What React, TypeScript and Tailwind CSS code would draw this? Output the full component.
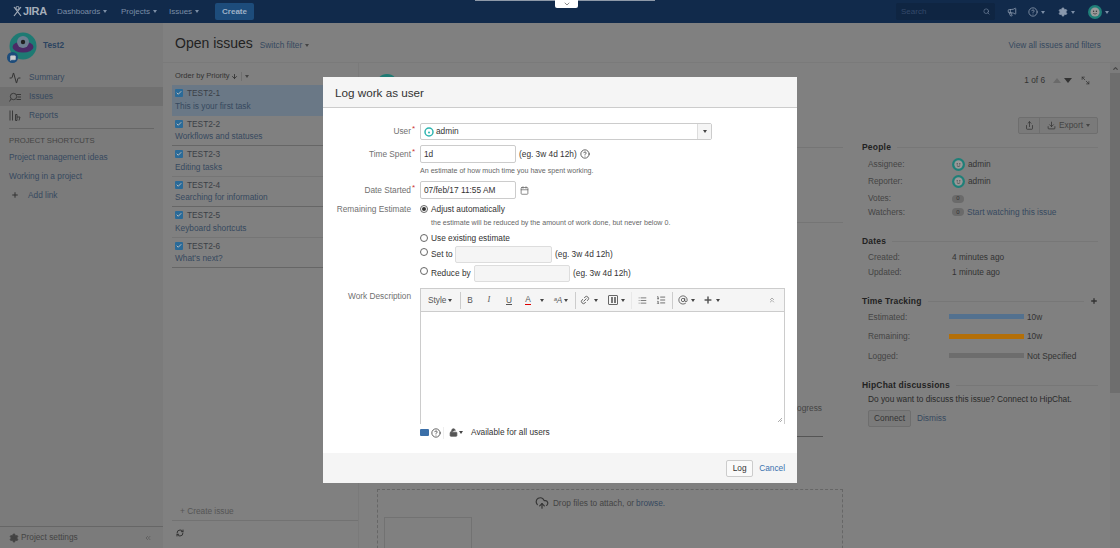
import React from "react";
import { ArrowDown, Calendar, ChevronDown, ChevronUp, ChevronsLeft, ChevronsUp, CircleHelp, Link2, List, ListOrdered, Plus, Search, Settings, Megaphone, Share, Download, RefreshCw, LockOpen, Activity, Maximize2, UploadCloud, AtSign, Check, MessageSquare } from "lucide-react";

const Caret = ({ c = "border-t-[#444]" }: { c?: string }) => (
  <span className={`inline-block w-0 h-0 border-l-[2.5px] border-r-[2.5px] border-t-[3px] border-l-transparent border-r-transparent ${c}`} />
);

const Face = ({ s = 13 }: { s?: number }) => (
  <svg width={s} height={s} viewBox="0 0 20 20" className="shrink-0">
    <circle cx="10" cy="10" r="10" fill="#1f7f78" />
    <circle cx="10" cy="10" r="6.5" fill="#999" />
    <circle cx="8" cy="9" r="1" fill="#333" />
    <circle cx="12" cy="9" r="1" fill="#333" />
    <path d="M7.5 12 Q10 14 12.5 12" stroke="#333" strokeWidth="1" fill="none" />
  </svg>
);

const issues = [
  ["TEST2-1", "This is your first task"],
  ["TEST2-2", "Workflows and statuses"],
  ["TEST2-3", "Editing tasks"],
  ["TEST2-4", "Searching for information"],
  ["TEST2-5", "Keyboard shortcuts"],
  ["TEST2-6", "What's next?"],
];

const SectionHead = ({ t, plus }: { t: string; plus?: boolean }) => (
  <div className="flex items-center gap-1.5 h-[12px]">
    <span className="font-bold text-[8.5px] text-[#222] tracking-[0.2px] whitespace-nowrap">{t}</span>
    <span className="flex-1 h-px bg-[#777]" />
    {plus && <Plus size={8} strokeWidth={4} className="text-[#333]" />}
  </div>
);

const Kv = ({ k, children, h = "h-[16px]", cls = "" }: { k: string; children: React.ReactNode; h?: string; cls?: string }) => (
  <div className={`flex items-center ${h} ${cls}`}>
    <span className="w-[90px] pl-[6px] shrink-0 text-[#444]">{k}</span>
    {children}
  </div>
);

const Bar = ({ k, c, v }: { k: string; c: string; v: string }) => (
  <div className="flex items-center h-[19.5px]">
    <span className="w-[87px] pl-[6px] shrink-0 text-[#444]">{k}</span>
    <span className={`w-[75px] h-[5px] ${c}`} />
    <span className="ml-[3px] text-[#333]">{v}</span>
  </div>
);

const Req = ({ t }: { t: string }) => (
  <span className="w-[89px] shrink-0 text-right text-[#707070] pr-px relative whitespace-nowrap">
    {t}
    <span className="absolute -right-[3px] -top-[2px] text-[#c33] text-[8px]">*</span>
  </span>
);

const Radio = ({ on }: { on?: boolean }) => (
  <span className="w-[8px] h-[8px] rounded-full border border-[#666] bg-white flex items-center justify-center shrink-0">
    {on && <span className="w-[4px] h-[4px] rounded-full bg-[#333]" />}
  </span>
);

const Sep = ({ c = "bg-[#ccc]", m = "" }: { c?: string; m?: string }) => <span className={`w-px h-[17px] shrink-0 ${c} ${m}`} />;

const Slot = ({ w, children }: { w: string; children: React.ReactNode }) => (
  <span className={`${w} shrink-0 flex items-center justify-center`}>{children}</span>
);

export default function App() {
  return (
    <div className="relative w-[1120px] h-[548px] overflow-hidden bg-[#808080] text-[8.3px] text-[#333] font-['Liberation_Sans',Arial,sans-serif]">
      {/* top bar */}
      <header className="h-[23px] bg-[#112a4b] flex items-center text-[8px] text-[#7c8ea6]">
        <div className="ml-[13px] w-[44px] flex items-center gap-[1px] text-[#a5aeba] font-bold text-[11px] tracking-[-0.3px]">
          <svg width="9" height="11" viewBox="0 0 9 11"><circle cx="4.5" cy="2" r="1.6" fill="none" stroke="#a5aeba" /><path d="M1 1 L8 10 M8 1 L1 10" stroke="#a5aeba" strokeWidth="1.2" /></svg>
          JIRA
        </div>
        <span className="flex items-center gap-[3px] w-[64px]">Dashboards <Caret c="border-t-[#7c8ea6]" /></span>
        <span className="flex items-center gap-[3px] w-[48px]">Projects <Caret c="border-t-[#7c8ea6]" /></span>
        <span className="flex items-center gap-[3px] w-[46px]">Issues <Caret c="border-t-[#7c8ea6]" /></span>
        <span className="h-[17px] w-[39px] rounded-[2px] bg-[#1d4c7b] text-[#9fb2c8] font-bold flex items-center justify-center">Create</span>
        <div className="ml-auto flex items-center">
          <div className="w-[99px] h-[17px] rounded-[2px] bg-[#0f2542] flex items-center justify-between px-[5px] text-[#34496a]">
            Search <Search size={7} className="text-[#7c8ea6]" />
          </div>
          <Megaphone size={10} className="ml-[12px] text-[#8a99ad]" />
          <CircleHelp size={10} className="ml-[11px] text-[#8a99ad]" />
          <span className="ml-[3px]"><Caret c="border-t-[#7c8ea6]" /></span>
          <Settings size={10} className="ml-[13px] text-[#8a99ad]" fill="#8a99ad" />
          <span className="ml-[3px]"><Caret c="border-t-[#7c8ea6]" /></span>
          <span className="ml-[13px]"><Face s={14} /></span>
          <span className="ml-[3px] mr-[11px]"><Caret c="border-t-[#7c8ea6]" /></span>
        </div>
      </header>

      <div className="flex h-[525px]">
        {/* project sidebar */}
        <aside className="w-[163px] shrink-0 bg-[#7b7b7b] flex flex-col">
          <div className="flex items-center h-[45px] pl-[9px] pt-[1px]">
            <div className="relative">
              <svg width="28" height="28" viewBox="0 0 28 28">
                <circle cx="14" cy="14" r="13.5" fill="#1e7a73" />
                <ellipse cx="14" cy="15" rx="10.5" ry="5.5" fill="#4a2a66" />
                <circle cx="14" cy="10" r="6" fill="#6d7f90" />
                <circle cx="14" cy="10" r="2.2" fill="#222" />
              </svg>
              <span className="absolute -left-[2px] bottom-[-3px] w-[11px] h-[11px] rounded-full bg-[#1d4c7b] flex items-center justify-center">
                <MessageSquare size={6} className="text-[#ccc]" fill="#ccc" />
              </span>
            </div>
            <span className="ml-[6px] font-bold text-[#2b4460] mb-[1px]">Test2</span>
          </div>
          <nav className="flex flex-col">
            <div className="h-[19px] flex items-center pl-[9px] gap-[8px] text-[#36495f]"><Activity size={12} className="text-[#333]" /><span>Summary</span></div>
            <div className="h-[19px] flex items-center pl-[9px] gap-[8px] text-[#36495f] bg-[#707070]">
              <svg width="12" height="10" viewBox="0 0 12 10" fill="none" stroke="#333" strokeWidth="0.9"><circle cx="4.5" cy="4.5" r="3.2" /><path d="M2 7 L0.5 9.5 M7.5 2.5 H12 M8.5 5 H12 M7.5 7.5 H12" /></svg>
              <span>Issues</span>
            </div>
            <div className="h-[19px] flex items-center pl-[9px] gap-[8px] text-[#36495f]">
              <svg width="12" height="11" viewBox="0 0 12 11" fill="none" stroke="#333" strokeWidth="0.9"><path d="M1 0.5 V10.5 M3.5 0.5 V10.5 M6.5 4.5 H8 V10.5 H6.5 Z M8 7 H11 L10 10.5" /></svg>
              <span>Reports</span>
            </div>
          </nav>
          <div className="mx-[9px] mt-[3px] h-px bg-[#666]" />
          <div className="pl-[9px] mt-[6px] text-[7.7px] text-[#444]">PROJECT SHORTCUTS</div>
          <div className="pl-[9px] mt-[1px] h-[19px] flex items-center text-[#36495f]">Project management ideas</div>
          <div className="pl-[9px] h-[19px] flex items-center text-[#36495f]">Working in a project</div>
          <div className="pl-[11px] h-[19px] flex items-center gap-[9px] text-[#36495f]"><Plus size={8} strokeWidth={3} className="text-[#333]" />Add link</div>
          <div className="mt-auto h-[22px] border-t border-[#666] flex items-center pl-[9px] pr-[11px] text-[#444]">
            <Settings size={10} fill="#444" className="text-[#444] mr-[2px]" />
            Project settings
            <ChevronsLeft size={8} className="ml-auto text-[#555]" />
          </div>
        </aside>

        {/* main */}
        <main className="flex-1 flex flex-col relative">
          <div className="h-[40px] flex items-center pl-[12px] pr-[19px] pt-[2px] border-b border-[#7a7a7a]">
            <span className="text-[14px] text-[#222]">Open issues</span>
            <span className="ml-[7px] text-[#36495f] flex items-center gap-[3px] mt-[3px]">Switch filter <Caret /></span>
            <span className="ml-auto text-[#36495f] mt-[3px]">View all issues and filters</span>
          </div>
          <div className="flex flex-1 min-h-0">
            {/* issue list */}
            <section className="w-[186px] ml-[9px] flex flex-col shrink-0">
              <div className="h-[22px] pt-[4px] flex items-center text-[7.5px] text-[#333]">
                <span className="ml-[3px]">Order by Priority</span>
                <ArrowDown size={7} strokeWidth={3} className="ml-[1px]" />
                <span className="w-px h-[9px] bg-[#707070] mx-[3px]" />
                <Caret />
              </div>
              {issues.map(([id, t], i) => (
                <div key={id} className={`h-[30.5px] px-[3px] flex flex-col justify-center border-b ${i === 0 ? "bg-[#6a7886] border-[#6a7886]" : i % 2 ? "border-[#666]" : "border-[#757575]"}`}>
                  <div className="flex items-center gap-[4px] text-[#3a3f46] h-[13px]">
                    <span className="w-[8px] h-[8px] rounded-[1px] bg-[#2a6a98] flex items-center justify-center"><Check size={6} strokeWidth={4} className="text-[#bbb]" /></span>
                    {id}
                  </div>
                  <div className="text-[#36495f] h-[13px] leading-[13px] whitespace-nowrap">{t}</div>
                </div>
              ))}
              <div className="mt-auto h-[21px] flex items-end pb-[3px] pl-[8px] text-[#555]">+ Create issue</div>
              <div className="h-[28px] border-t border-[#727272] pl-[4px] pt-[8px]"><RefreshCw size={8} strokeWidth={3} className="text-[#333]" /></div>
            </section>

            {/* detail */}
            <section className="flex-1 border-l border-[#7a7a7a] flex flex-col min-w-0">
              <div className="h-[35px] flex items-center pr-[20px] mr-[10px]">
                <span className="ml-[17px] self-start mt-[11px] w-[22px] h-[22px] rounded-full bg-[#1e7a73]" />
                <span className="ml-auto text-[#333]">1 of 6</span>
                <span className="ml-[8px] w-0 h-0 border-l-[4px] border-r-[4px] border-b-[5px] border-l-transparent border-r-transparent border-b-[#6a6a6a]" />
                <span className="ml-[3px] w-0 h-0 border-l-[4px] border-r-[4px] border-t-[5px] border-l-transparent border-r-transparent border-t-[#333]" />
                <Maximize2 size={9} className="ml-[9px] text-[#333] -scale-x-100" />
              </div>
              <div className="flex justify-end pr-[12px] mr-[10px] mt-[19px]">
                <div className="flex h-[17px] border border-[#6e6e6e] rounded-[2px] bg-[#7a7a7a] items-center">
                  <span className="w-[21px] flex justify-center border-r border-[#6e6e6e] h-full items-center"><Share size={9} className="text-[#333]" /></span>
                  <span className="px-[7px] flex items-center gap-[3px] text-[#444]"><Download size={9} className="text-[#333]" />Export <Caret /></span>
                </div>
              </div>
              <div className="flex flex-1 min-h-0 relative">
                <div className="flex-1 pt-[13px] pl-[18px]">
                  <div className="h-px bg-[#757575]" />
                  <div className="h-px bg-[#757575] mt-[74px]" />
                  <div className="mt-[179px] text-right text-[#444] pr-[21px]">In Progress</div>
                  <div className="h-px bg-[#555] mt-[22px] mr-[20px] ml-[420px]" />
                  <div className="mt-[52px] border border-dashed border-[#666] h-[70px] pt-[6px] flex flex-col">
                    <div className="flex items-center justify-center gap-[4px] pr-[20px] text-[#444]"><UploadCloud size={14} className="text-[#333]" />Drop files to attach, or <span className="text-[#36495f] -ml-[2px]">browse.</span></div>
                    <div className="ml-[6px] mt-[7px] w-[88px] flex-1 border border-[#727272]" />
                  </div>
                </div>
                <div className="w-[236px] ml-[19px] mr-[22px] shrink-0 pt-[7px]">
                  <SectionHead t="People" />
                  <div className="mt-[3px] flex flex-col">
                    <Kv k="Assignee:"><Face /><span className="ml-[3px]">admin</span></Kv>
                    <Kv k="Reporter:" h="h-[18px]"><Face /><span className="ml-[3px]">admin</span></Kv>
                    <Kv k="Votes:" h="h-[13px]" cls="mt-[2px]"><span className="w-[12px] h-[8px] rounded-full bg-[#6a6a6a] text-[6px] flex items-center justify-center">0</span></Kv>
                    <Kv k="Watchers:" h="h-[14px]"><span className="w-[12px] h-[8px] rounded-full bg-[#6a6a6a] text-[6px] flex items-center justify-center">0</span><span className="ml-[3px] text-[#36495f]">Start watching this issue</span></Kv>
                  </div>
                  <div className="mt-[16px]"><SectionHead t="Dates" /></div>
                  <div className="mt-[3px] flex flex-col">
                    <Kv k="Created:" h="h-[15px]"><span>4 minutes ago</span></Kv>
                    <Kv k="Updated:" h="h-[14px]"><span>1 minute ago</span></Kv>
                  </div>
                  <div className="mt-[16px]"><SectionHead t="Time Tracking" plus /></div>
                  <div>
                    <Bar k="Estimated:" c="bg-[#53718f]" v="10w" />
                    <Bar k="Remaining:" c="bg-[#b46f08]" v="10w" />
                    <Bar k="Logged:" c="bg-[#6d6d6d]" v="Not Specified" />
                  </div>
                  <div className="mt-[14px]"><SectionHead t="HipChat discussions" /></div>
                  <div className="mt-[1px] pl-[6px] text-[#2a2a2a] whitespace-nowrap">Do you want to discuss this issue? Connect to HipChat.</div>
                  <div className="mt-[5px] pl-[6px] flex items-center">
                    <span className="w-[43px] h-[17px] border border-[#6e6e6e] rounded-[2px] bg-[#7a7a7a] flex items-center justify-center text-[#333]">Connect</span>
                    <span className="ml-[6px] text-[#36495f]">Dismiss</span>
                  </div>
                </div>
              </div>
            </section>
          </div>
          {/* scrollbar */}
          <div className="absolute right-0 top-[40px] bottom-0 w-[10px] bg-[#7c7c7c] flex flex-col">
            <div className="h-[10px] flex items-center justify-center"><ChevronUp size={7} strokeWidth={4} className="text-[#444]" /></div>
            <div className="h-[320px] bg-[#6e6e6e]" />
          </div>
        </main>
      </div>

      {/* collapsed top tab */}
      <div className="absolute top-0 left-[475px] w-[180px] h-[1px] bg-[#8e99a8]" />
      <div className="absolute top-0 left-[555px] w-[23px] h-[8px] bg-white rounded-b-[2px] flex items-center justify-center">
        <ChevronDown size={8} className="text-[#555]" />
      </div>

      {/* dialog */}
      <div className="absolute left-[323px] top-[77px] w-[474px] h-[406px] bg-white flex flex-col text-[8.3px] text-[#333]">
        <div className="h-[31px] shrink-0 bg-[#f5f5f5] border-b border-[#ccc] flex items-center pl-[12px] pt-[2px] text-[11.7px] text-[#333]">Log work as user</div>
        <div className="flex-1 flex flex-col pr-[12px] pt-[15px]">
          <div className="flex items-center h-[17px]">
            <Req t="User" />
            <div className="ml-[8px] w-[292px] h-[17px] border border-[#ccc] rounded-[2px] flex items-center pl-[3px] bg-white">
              <svg width="10" height="10" viewBox="0 0 20 20"><circle cx="10" cy="10" r="8" fill="none" stroke="#2fb5b0" strokeWidth="3" /><circle cx="10" cy="11" r="2" fill="#2fb5b0" /></svg>
              <span className="ml-[2px]">admin</span>
              <span className="ml-auto w-[14px] h-full bg-[#f5f5f5] border-l border-[#ddd] flex items-center justify-center"><Caret /></span>
            </div>
          </div>
          <div className="flex items-center h-[18px] mt-[5px]">
            <Req t="Time Spent" />
            <span className="ml-[8px] w-[96px] h-[18px] border border-[#ccc] rounded-[2px] flex items-center pl-[3px]">1d</span>
            <span className="ml-[3px]">(eg. 3w 4d 12h)</span>
            <CircleHelp size={10} className="ml-[3px] text-[#444]" />
          </div>
          <div className="ml-[97px] mt-[2px] h-[12px] flex items-center text-[7.1px] text-[#666]">An estimate of how much time you have spent working.</div>
          <div className="flex items-center h-[18px] mt-[4px]">
            <Req t="Date Started" />
            <span className="ml-[8px] w-[96px] h-[18px] border border-[#ccc] rounded-[2px] flex items-center pl-[3px] whitespace-nowrap">07/feb/17 11:55 AM</span>
            <Calendar size={9} className="ml-[4px] text-[#666]" />
          </div>
          <div className="flex items-center h-[12px] mt-[4px]">
            <span className="w-[89px] shrink-0 text-right text-[#707070] pr-px whitespace-nowrap">Remaining Estimate</span>
            <span className="ml-[8px]"><Radio on /></span>
            <span className="ml-[3px]">Adjust automatically</span>
          </div>
          <div className="ml-[108px] mt-[3px] h-[11px] flex items-center text-[7.1px] text-[#666] whitespace-nowrap">the estimate will be reduced by the amount of work done, but never below 0.</div>
          <div className="flex items-center ml-[97px] h-[12px] mt-[3px]"><Radio /><span className="ml-[3px]">Use existing estimate</span></div>
          <div className="flex items-center ml-[97px] h-[17px] mt-[2px]">
            <span className="-mt-[5px]"><Radio /></span><span className="ml-[3px] w-[24px]">Set to</span>
            <span className="w-[97px] h-[17px] bg-[#f5f5f5] border border-[#ddd] rounded-[2px]" />
            <span className="ml-[3px]">(eg. 3w 4d 12h)</span>
          </div>
          <div className="flex items-center ml-[97px] h-[17px] mt-[2px]">
            <span className="-mt-[5px]"><Radio /></span><span className="ml-[3px] w-[43px]">Reduce by</span>
            <span className="w-[96px] h-[17px] bg-[#f5f5f5] border border-[#ddd] rounded-[2px]" />
            <span className="ml-[3px]">(eg. 3w 4d 12h)</span>
          </div>
          <div className="flex mt-[6px]">
            <span className="w-[89px] shrink-0 text-right text-[#707070] pr-px mt-[2px] whitespace-nowrap">Work Description</span>
            <div className="ml-[8px] w-[365px] h-[136px] border border-[#ccc] border-b-0 flex flex-col relative">
              <div className="h-[23px] bg-[#f5f5f5] border-b border-[#ccc] flex items-center text-[#555] shrink-0">
                <span className="w-[39px] shrink-0 pl-[7px] flex items-center gap-[2px] whitespace-nowrap">Style <Caret /></span>
                <Sep />
                <Slot w="w-[18px]"><span>B</span></Slot>
                <Slot w="w-[20px]"><span className="italic font-['Liberation_Serif',serif]">I</span></Slot>
                <Slot w="w-[20px]"><span className="underline">U</span></Slot>
                <Slot w="w-[18px]"><span className="border-b-[1.5px] border-[#d00] leading-[9px]">A</span></Slot>
                <Slot w="w-[10px]"><Caret /></Slot>
                <Slot w="w-[28px]"><span className="italic whitespace-nowrap mr-[2px]">ᵃA</span><Caret /></Slot>
                <Sep />
                <Slot w="w-[17px]"><Link2 size={10} className="-rotate-45" /></Slot>
                <Slot w="w-[6px]"><Caret /></Slot>
                <span className="ml-[9px] w-[10px] h-[10px] shrink-0 border border-[#666] rounded-[1px] flex items-center justify-center gap-px"><span className="w-[2px] h-[6px] border border-[#777]" /><span className="w-[2px] h-[6px] border border-[#777]" /></span>
                <span className="ml-[3px] flex"><Caret /></span>
                <Sep c="bg-[#e8e8e8]" m="ml-[6px]" />
                <List size={9} className="ml-[6px]" />
                <ListOrdered size={10} className="ml-[9px]" />
                <Sep m="ml-[6px]" />
                <AtSign size={10} className="ml-[5px]" />
                <span className="ml-[3px] flex"><Caret /></span>
                <Plus size={10} strokeWidth={3.5} className="ml-[8px]" />
                <span className="ml-[3px] flex"><Caret /></span>
                <ChevronsUp size={8} className="ml-auto mr-[8px] text-[#888]" />
              </div>
              <div className="flex-1" />
              <svg width="6" height="6" viewBox="0 0 6 6" className="absolute right-[1px] bottom-[1px]"><path d="M5 1 L1 5 M5 3 L3 5" stroke="#999" strokeWidth="0.8" /></svg>
            </div>
          </div>
          <div className="flex items-center ml-[97px] mt-[2px] h-[13px]">
            <span className="w-[9px] h-[7px] bg-[#3b6fa8] rounded-[1px]" />
            <CircleHelp size={10} className="ml-[2px] text-[#444]" />
            <span className="ml-[2px] w-px h-[12px] bg-[#eee]" />
            <LockOpen size={9} fill="#555" className="ml-[5px] text-[#555]" />
            <span className="ml-[1px] flex"><Caret /></span>
            <span className="ml-[8px] whitespace-nowrap">Available for all users</span>
          </div>
        </div>
        <div className="h-[30px] shrink-0 bg-[#f5f5f5] flex items-center justify-end pr-[12px]">
          <span className="w-[27px] h-[17px] border border-[#ccc] rounded-[2px] bg-[#fafafa] flex items-center justify-center">Log</span>
          <span className="ml-[6px] text-[#3b73af]">Cancel</span>
        </div>
      </div>
    </div>
  );
}
